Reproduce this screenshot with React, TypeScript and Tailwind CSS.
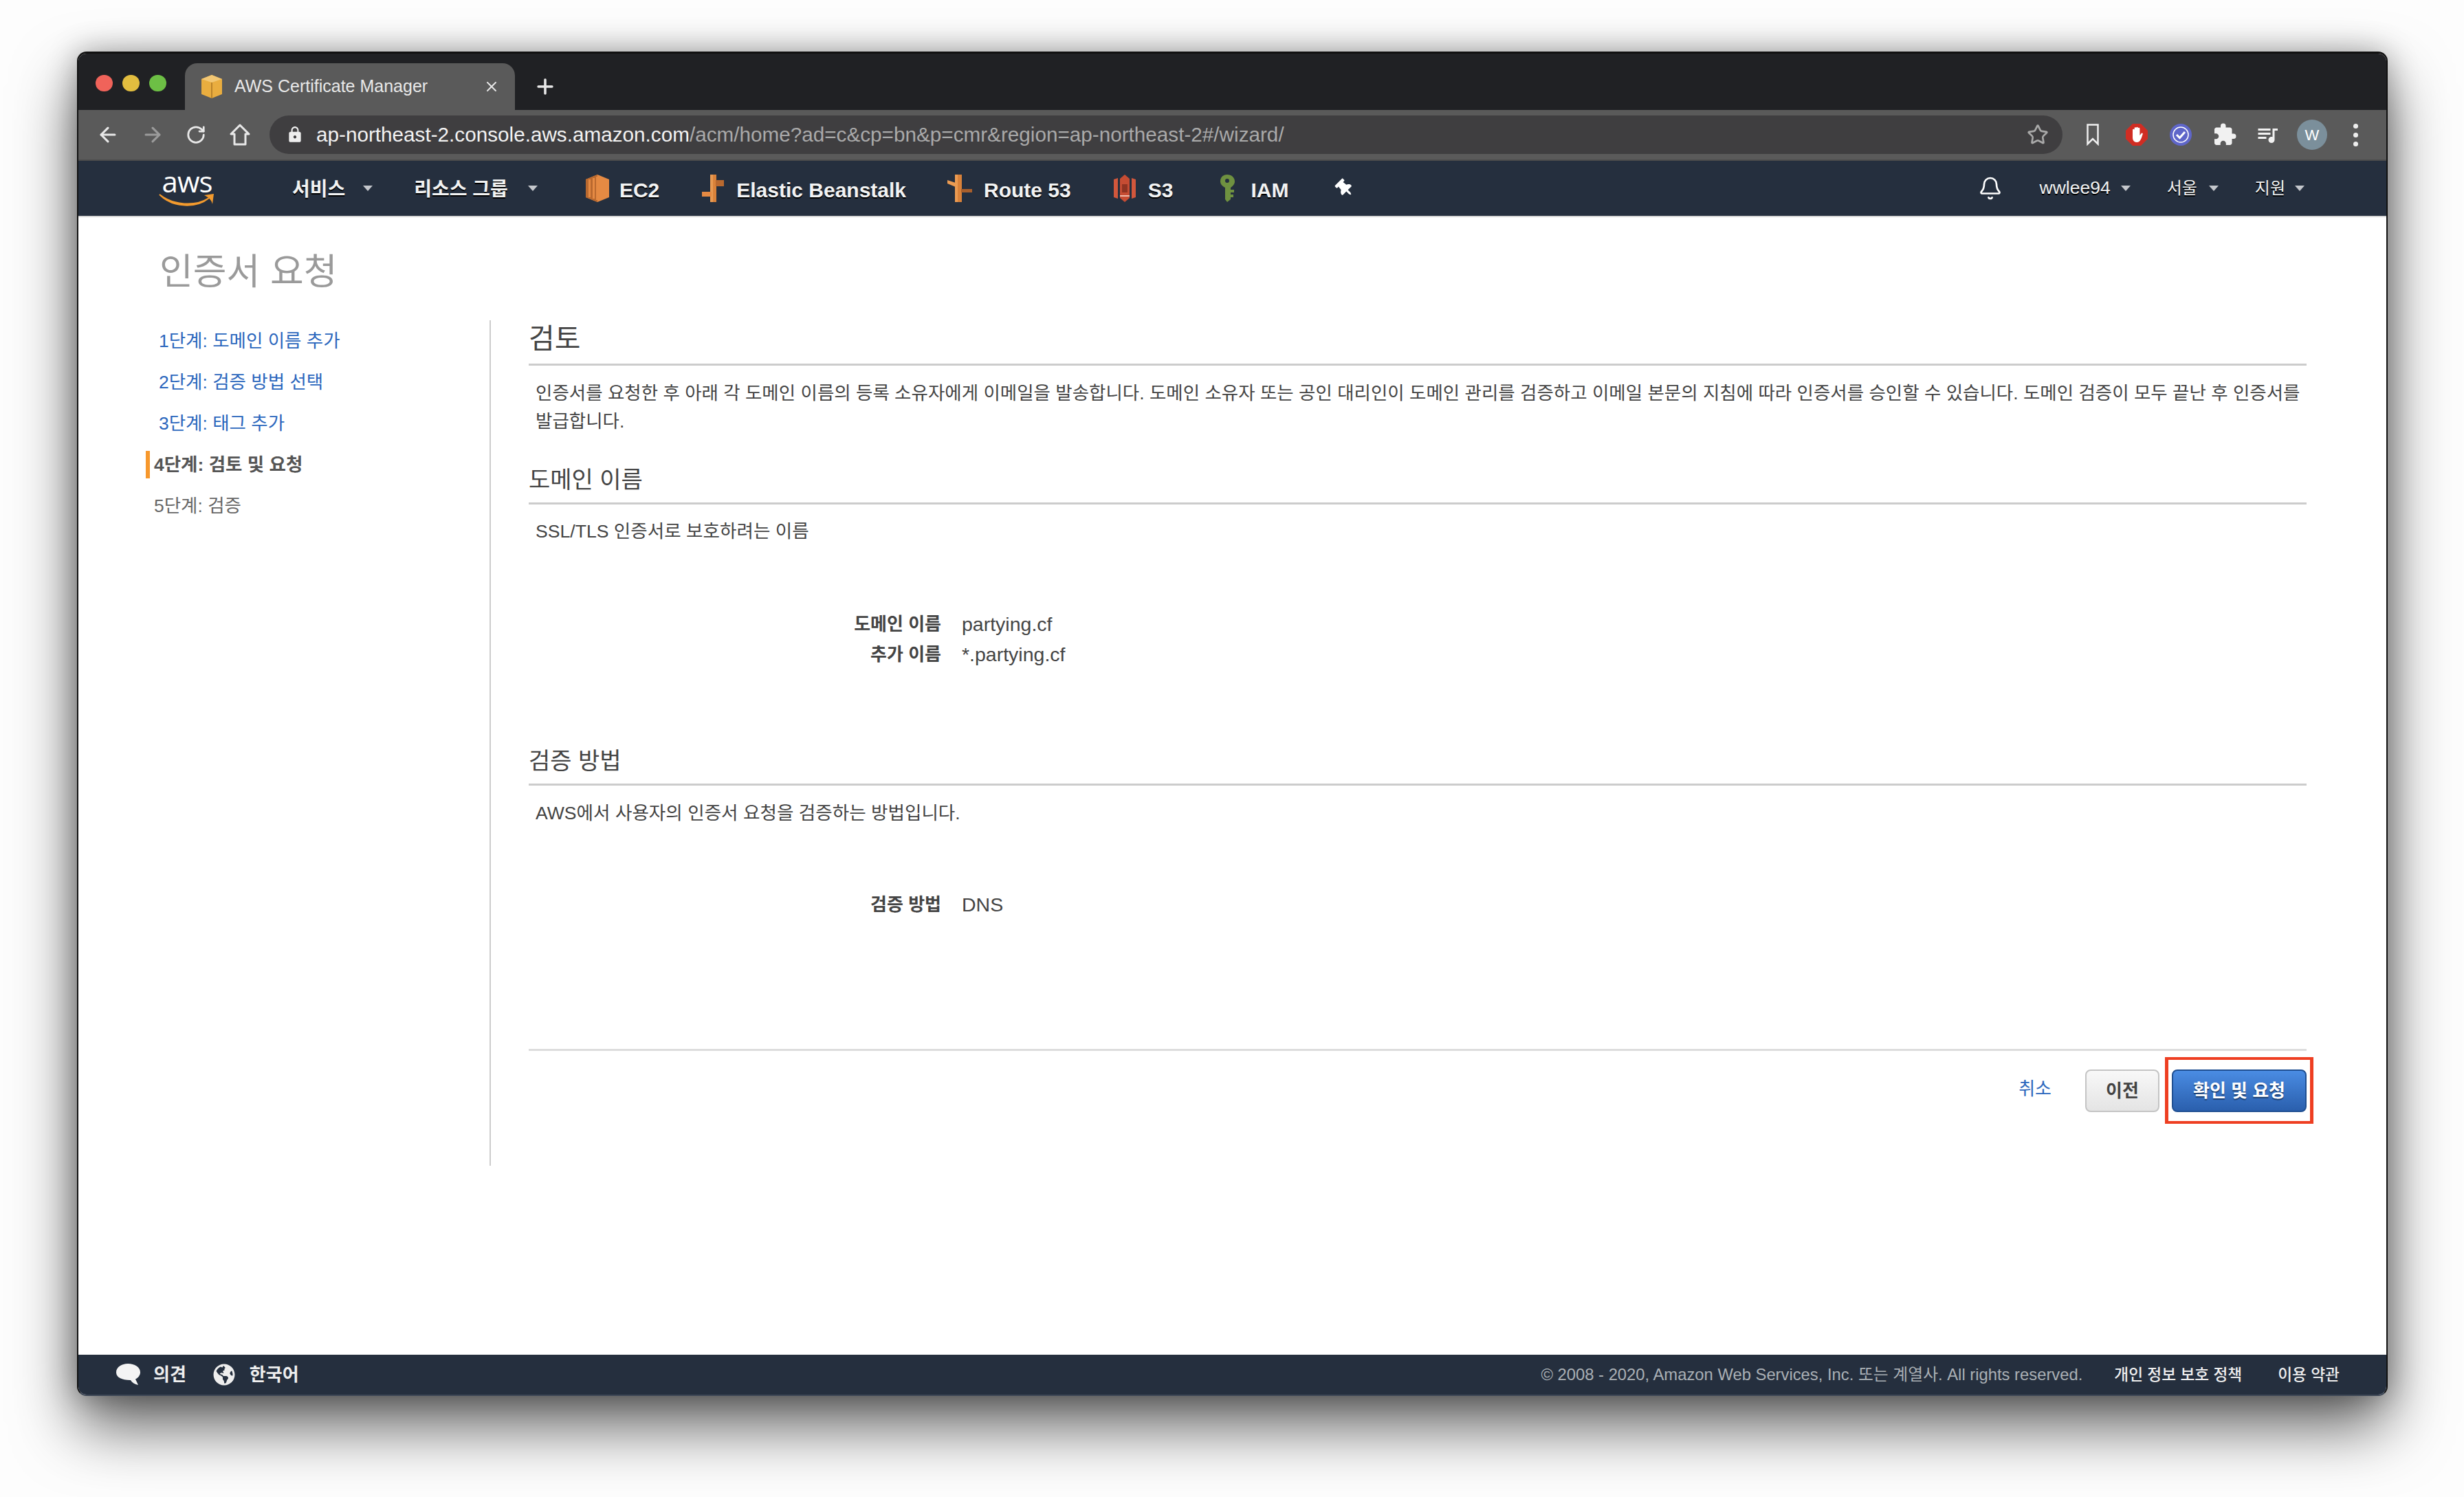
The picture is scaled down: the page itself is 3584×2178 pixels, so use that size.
import React from 'react';
import { ArrowLeft, ArrowRight, RotateCw, Star, Bell, Plus, X } from 'lucide-react';
import { MdExtension, MdLock, MdQueueMusic } from 'react-icons/md';
import { FaGlobeAmericas, FaThumbtack } from 'react-icons/fa';

const Caret = ({ className = 'ml-[26px]' }: { className?: string }) => (
  <span className={`${className} w-0 h-0 border-x-[7px] border-x-transparent border-t-[8px] border-t-[#c4c7cc] shrink-0`} />
);

const Ec2Icon = () => (
  <svg width="36" height="40" viewBox="0 0 36 40" className="shrink-0">
    <path d="M1 7 18 0l17 7v26l-17 7-17-7z" fill="#e58a43" />
    <path d="M1 7 18 0v40L1 33z" fill="#b9692f" />
    <path d="M5 7h3v26H5zM11 5h3v30h-3zM16 3h5v34h-5z" fill="#e58a43" />
  </svg>
);

const BeanstalkIcon = () => (
  <svg width="34" height="40" viewBox="0 0 34 40" className="shrink-0">
    <path d="M12 0h9v40h-9z" fill="#d9823a" />
    <path d="M12 0h4v40h-4z" fill="#e89a52" />
    <path d="M0 25h14v7H0z" fill="#e58a43" />
    <path d="M20 8h12v9H20z" fill="#b9692f" />
  </svg>
);

const RouteIcon = () => (
  <svg width="36" height="40" viewBox="0 0 36 40" className="shrink-0">
    <path d="M11 0h10v40H11z" fill="#d9823a" />
    <path d="M11 0h4v40h-4z" fill="#eb9b52" />
    <path d="M0 8l12 4v6L0 13z" fill="#eb9b52" />
    <path d="M20 21h16v5H20z" fill="#a85f2c" />
  </svg>
);

const S3Icon = () => (
  <svg width="32" height="40" viewBox="0 0 32 40" className="shrink-0">
    <path d="M0 7l6-2v30l-6-2zM32 7l-6-2v30l6-2z" fill="#d2573c" />
    <path d="M9 6l7-6 7 6v28l-7 6-7-6z" fill="#c64c33" />
    <path d="M12 14h8v12h-8z" fill="#8f3322" />
    <path d="M9 30h14v2H9z" fill="#f0b8a8" />
  </svg>
);

const KeyIcon = () => (
  <svg width="22" height="40" viewBox="0 0 22 40" className="shrink-0">
    <path fillRule="evenodd" d="M11 0c6 0 11 4 11 10 0 4-3 7-6 9v17l-5 4-3-4V19c-4-2-7-5-7-9C1 4 5 0 11 0zm0 6a3 3 0 100 6 3 3 0 000-6z" fill="#6f9140" />
    <path d="M15 22h6v4h-6zM15 29h5v4h-5z" fill="#6f9140" />
  </svg>
);

const CubeIcon = () => (
  <svg width="30" height="34" viewBox="0 0 30 34">
    <path d="M0 6l15-6 15 6v22l-15 6-15-6z" fill="#e9ad3f" />
    <path d="M0 6l15 5 15-5-15-6z" fill="#f2c774" />
    <path d="M14 11h2v23h-2z" fill="#b9832a" />
  </svg>
);

const AwsLogo = () => (
  <div className="flex flex-col items-center w-[82px] shrink-0">
    <span className="text-[42px] leading-[34px] text-white font-['Open_Sans',sans-serif] tracking-[-1px]">aws</span>
    <svg width="82" height="22" viewBox="0 0 82 22" className="-mt-[1px]">
      <path d="M1 3c20 16 52 18 72 5-18 15-52 15-72-5z" fill="#f29a2e" stroke="#f29a2e" strokeWidth="2" />
      <path d="M66 4l14-2-2 15c-1-5-4-9-12-13z" fill="#f29a2e" />
    </svg>
  </div>
);

const BookmarkIcon = () => (
  <svg width="18" height="32" viewBox="0 0 18 32" className="ml-[35px] shrink-0">
    <path d="M1.500 1.500h15v28L9 22l-7.500 7.500z" fill="none" stroke="#eee" strokeWidth="2.500" />
  </svg>
);

const BlockIcon = () => (
  <svg width="32" height="32" viewBox="0 0 32 32">
    <path d="M10 0h12l10 10v12L22 32H10L0 22V10z" fill="#d02d23" />
    <path d="M10 17V9a1.300 1.300 0 012.600 0V6.500a1.300 1.300 0 012.600 0V6a1.300 1.300 0 012.600 0v1a1.300 1.300 0 012.600 0v10l2.400-3c1-1 2.500 0 1.800 1.400C23 20 21.500 27 16 27c-4 0-6-3-6-7z" fill="#fff" />
  </svg>
);

const CheckIcon = () => (
  <svg width="32" height="32" viewBox="0 0 32 32">
    <circle cx="16" cy="16" r="16" fill="#5f66c9" />
    <circle cx="16" cy="16" r="11" fill="none" stroke="#fff" strokeWidth="1.500" />
    <path d="M10 16l4.500 4.500L22 12" fill="none" stroke="#fff" strokeWidth="3" />
  </svg>
);

const SpeechIcon = () => (
  <svg width="35" height="32" viewBox="0 0 35 32">
    <path d="M17 0c10 0 18 5 18 12.500 0 4.500-3 8-7 10l4 8.500c-5-1-9-3.500-11-7C8 24 0 20 0 12.500 0 5 8 0 17 0z" fill="#f4f4f4" />
  </svg>
);

const navLink = 'text-[30px] mt-[5px] font-bold text-[#f2f3f3] [text-shadow:0_2px_0_#000] whitespace-nowrap';
const navMenu = 'text-[28px] mt-[3px] font-bold text-[#f2f3f3] [text-shadow:0_2px_0_#000] whitespace-nowrap';

const DetailRow = ({ label, value }: { label: string; value: string }) => (
  <div className="flex items-center h-[44px]">
    <span className="w-[600px] text-right font-bold text-[26px] text-[#444]">{label}</span>
    <span className="ml-[30px] text-[28.5px] text-[#444]">{value}</span>
  </div>
);

const SectionHeading = ({ title, className = '' }: { title: string; className?: string }) => (
  <h2 className={`text-[34px] leading-[50px] text-[#444] border-b-[3px] border-[#ccc] pb-[8px] ${className}`}>{title}</h2>
);

export default function App() {
  return (
    <div className="w-[3584px] h-[2178px] bg-[#fdfdfd] pl-[112px] pt-[75px] font-['Liberation_Sans','Noto_Sans_CJK_KR',sans-serif] overflow-hidden">
      <div className="w-[3361px] h-[1956px] flex flex-col rounded-[14px] overflow-hidden border-x-2 border-t-[3px] border-b-2 border-x-[#111] border-t-[#111] border-b-[#3c4655] bg-white shadow-[0_44px_90px_rgba(0,0,0,0.62),0_0_44px_rgba(0,0,0,0.3)]">
        {/* tab strip */}
        <div className="h-[82px] shrink-0 bg-[#202124] flex items-end">
          <div className="flex items-center gap-[14px] ml-[25px] mb-[27px] shrink-0">
            <span className="w-[25px] h-[24px] rounded-full bg-[#f0635a]" />
            <span className="w-[25px] h-[24px] rounded-full bg-[#e2bd3f]" />
            <span className="w-[25px] h-[24px] rounded-full bg-[#6dbf45]" />
          </div>
          <div className="ml-[27px] w-[480px] h-[68px] rounded-t-[18px] bg-[#5a5a5a] flex items-center pl-[24px] shrink-0">
            <CubeIcon />
            <span className="ml-[18px] text-[25px] text-[#e8e8e8] whitespace-nowrap">AWS Certificate Manager</span>
            <X size={24} className="ml-auto mr-[22px] text-[#e8e8e8]" />
          </div>
          <Plus size={34} strokeWidth={2.500} className="ml-[27px] mb-[17px] text-[#e8e8e8]" />
        </div>

        {/* toolbar */}
        <div className="h-[74px] shrink-0 bg-[#5a5a5a] border-b-2 border-[#4c4c4c] flex items-center">
          <ArrowLeft size={34} strokeWidth={2.200} className="ml-[26px] text-[#e8e8e8]" />
          <ArrowRight size={34} strokeWidth={2.200} className="ml-[31px] text-[#9b9b9b]" />
          <RotateCw size={30} strokeWidth={2.200} className="ml-[31px] text-[#e8e8e8]" />
          <svg width="30" height="32" viewBox="0 0 30 32" className="ml-[34px] text-[#e8e8e8]">
            <path d="M15 2 2 15h5v15h16V15h5z" fill="none" stroke="currentColor" strokeWidth="3" strokeLinejoin="round" />
          </svg>
          <div className="ml-[28px] w-[608px] grow h-[56px] rounded-full bg-[#3f3e40] flex items-center pl-[24px] pr-[20px]">
            <MdLock size={26} className="text-[#eee]" />
            <span className="ml-[18px] text-[29.7px] whitespace-nowrap text-[#f2f2f2]">
              ap-northeast-2.console.aws.amazon.com<span className="text-[#a9a9a9]">/acm/home?ad=c&amp;cp=bn&amp;p=cmr&amp;region=ap-northeast-2#/wizard/</span>
            </span>
            <Star size={32} strokeWidth={2} className="ml-auto text-[#a9a9a9]" />
          </div>
          <BookmarkIcon />
          <div className="ml-[39px] shrink-0"><BlockIcon /></div>
          <div className="ml-[32px] shrink-0"><CheckIcon /></div>
          <MdExtension size={36} className="ml-[30px] text-[#f1f1f1] shrink-0" />
          <MdQueueMusic size={36} className="ml-[26px] text-[#f1f1f1] shrink-0" />
          <span className="ml-[25px] w-[44px] h-[44px] rounded-full bg-[#7b8f9b] text-white text-[22px] flex items-center justify-center shrink-0">W</span>
          <div className="ml-[38px] mr-[41px] flex flex-col gap-[6px] shrink-0">
            <span className="w-[7px] h-[7px] rounded-full bg-[#eee]" />
            <span className="w-[7px] h-[7px] rounded-full bg-[#eee]" />
            <span className="w-[7px] h-[7px] rounded-full bg-[#eee]" />
          </div>
        </div>

        {/* aws nav */}
        <div className="h-[82px] shrink-0 bg-[#252f3e] border-b-2 border-[#d5d5d5] flex items-center pl-[117px]">
          <AwsLogo />
          <span className={`${navMenu} ml-[112px]`}>서비스</span>
          <Caret />
          <span className={`${navMenu} ml-[60px]`}>리소스 그룹</span>
          <Caret className="ml-[29px]" />
          <div className="ml-[69px]"><Ec2Icon /></div>
          <span className={`${navLink} ml-[14px]`}>EC2</span>
          <div className="ml-[62px]"><BeanstalkIcon /></div>
          <span className={`${navLink} ml-[16px]`}>Elastic Beanstalk</span>
          <div className="ml-[60px]"><RouteIcon /></div>
          <span className={`${navLink} ml-[17px]`}>Route 53</span>
          <div className="ml-[62px]"><S3Icon /></div>
          <span className={`${navLink} ml-[18px]`}>S3</span>
          <div className="ml-[68px]"><KeyIcon /></div>
          <span className={`${navLink} ml-[23px]`}>IAM</span>
          <FaThumbtack size={26} className="ml-[69px] text-white -rotate-45" />
          <Bell size={36} strokeWidth={1.800} className="ml-auto text-white" />
          <span className="ml-[54px] text-[26.5px] text-[#f2f3f3] [text-shadow:0_2px_0_#000]">wwlee94</span>
          <Caret className="ml-[15px]" />
          <span className="ml-[53px] text-[24px] text-[#f2f3f3] [text-shadow:0_2px_0_#000]">서울</span>
          <Caret className="ml-[17px]" />
          <span className="ml-[53px] text-[24px] text-[#f2f3f3] [text-shadow:0_2px_0_#000]">지원</span>
          <Caret className="ml-[14px]" />
          <span className="w-[119px] shrink-0" />
        </div>

        {/* page */}
        <div className="flex-1 flex flex-col pl-[120px] pr-[116px] min-h-0">
          <h1 className="mt-[46px] -ml-[2px] text-[53px] leading-[68px] text-[#9a9a9a]">인증서 요청</h1>
          <div className="mt-[36px] flex">
            <div className="w-[500px] shrink-0 -ml-[22px] text-[26.5px] leading-[60px]">
              <div className="pl-[19px] text-[#2a66bd]">1단계: 도메인 이름 추가</div>
              <div className="pl-[19px] text-[#2a66bd]">2단계: 검증 방법 선택</div>
              <div className="pl-[19px] text-[#2a66bd]">3단계: 태그 추가</div>
              <div className="h-[60px] flex items-center font-bold text-[#555]">
                <span className="w-[6px] h-[40px] bg-[#f7982c]" />
                <span className="ml-[6px]">4단계: 검토 및 요청</span>
              </div>
              <div className="pl-[12px] text-[#666]">5단계: 검증</div>
            </div>

            <div className="flex-1 h-[1230px] border-l-[2px] border-[#ccc] pl-[55px]">
              <h2 className="pt-[2px] pb-[11px] text-[41px] leading-[50px] text-[#444] border-b-[3px] border-[#ccc]">검토</h2>
              <p className="mt-[20px] pl-[10px] text-[26.5px] leading-[41px] text-[#444] whitespace-nowrap">
                인증서를 요청한 후 아래 각 도메인 이름의 등록 소유자에게 이메일을 발송합니다. 도메인 소유자 또는 공인 대리인이 도메인 관리를 검증하고 이메일 본문의 지침에 따라 인증서를 승인할 수 있습니다. 도메인 검증이 모두 끝난 후 인증서를
                <br />
                발급합니다.
              </p>

              <SectionHeading title="도메인 이름" className="mt-[39px]" />
              <p className="mt-[19px] pl-[10px] text-[26.6px] leading-[41px] text-[#444]">SSL/TLS 인증서로 보호하려는 이름</p>
              <div className="mt-[92px]">
                <DetailRow label="도메인 이름" value="partying.cf" />
                <DetailRow label="추가 이름" value="*.partying.cf" />
              </div>

              <SectionHeading title="검증 방법" className="mt-[108px]" />
              <p className="mt-[20px] pl-[10px] text-[26.6px] leading-[41px] text-[#444]">AWS에서 사용자의 인증서 요청을 검증하는 방법입니다.</p>
              <div className="mt-[90px]">
                <DetailRow label="검증 방법" value="DNS" />
              </div>

              <div className="mt-[188px] border-t-[3px] border-[#ddd] pt-[27px] flex items-center justify-end">
                <span className="text-[26px] text-[#2a66bd] -mt-[5px]">취소</span>
                <button className="ml-[49px] w-[108px] h-[62px] rounded-[8px] border-2 border-[#c4c4c4] bg-gradient-to-b from-[#f8f8f8] to-[#e4e4e4] text-[26px] font-bold text-[#444]">이전</button>
                <div className="relative ml-[18px]">
                  <button className="block w-[196px] h-[62px] rounded-[8px] border-2 border-[#1f4f92] bg-gradient-to-b from-[#4a8ce3] to-[#2a5fad] text-[26px] font-bold text-white [text-shadow:0_2px_1px_#1c3f70]">확인 및 요청</button>
                  <div className="absolute left-[-10px] top-[-18px] w-[216px] h-[97px] border-x-[5px] border-y-[4px] border-[#ee3f22]" />
                </div>
              </div>
            </div>
          </div>
        </div>

        {/* footer */}
        <div className="h-[58px] shrink-0 bg-[#252f3e] flex items-center pl-[55px] pr-[68px]">
          <SpeechIcon />
          <span className="ml-[19px] text-[26px] font-bold text-[#eee]">의견</span>
          <FaGlobeAmericas size={32} className="ml-[39px] text-[#eee]" />
          <span className="ml-[21px] text-[26px] font-bold text-[#eee]">한국어</span>
          <span className="ml-auto text-[23.8px] text-[#aab0b5] whitespace-nowrap">© 2008 - 2020, Amazon Web Services, Inc. 또는 계열사. All rights reserved.</span>
          <span className="ml-[46px] text-[22.7px] font-medium text-[#eee] whitespace-nowrap">개인 정보 보호 정책</span>
          <span className="ml-[52px] text-[22.7px] font-medium text-[#eee] whitespace-nowrap">이용 약관</span>
        </div>
      </div>
    </div>
  );
}
